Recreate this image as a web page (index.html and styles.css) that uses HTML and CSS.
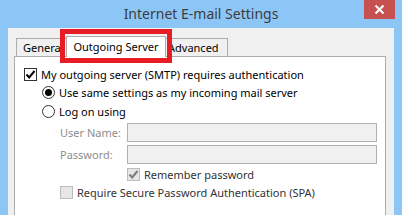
FILE: index.html
```html
<!DOCTYPE html>
<html>
<head>
<meta charset="utf-8">
<link rel="stylesheet" href="styles.css">
</head>
<body>
<div class="window">
  <div class="titlebar">
    <div></div>
    <div class="title">Internet E-mail Settings</div>
    <div class="close"><svg width="11" height="11" viewBox="0 0 11 11"><path d="M1.5 1.5 L9.5 9.5 M9.5 1.5 L1.5 9.5" stroke="#fff" stroke-width="2"/></svg></div>
  </div>
  <div class="client">
    <div class="tabs">
      <div class="tab general">General</div>
      <div class="tab selected">Outgoing Server</div>
      <div class="tab advanced">Advanced</div>
      <div class="highlight"></div>
    </div>
    <div class="panel">
      <div class="row r1">
        <span class="check on"><svg width="11" height="11" viewBox="0 0 11 11"><path d="M1.5 5.5 L4.2 8.5 L9.5 2" fill="none" stroke="#000" stroke-width="2"/></svg></span>
        <span class="txt">My outgoing server (SMTP) requires authentication</span>
      </div>
      <div class="row r2">
        <span class="radio on"><span class="dot"></span></span>
        <span class="txt">Use same settings as my incoming mail server</span>
      </div>
      <div class="row r3">
        <span class="radio"></span>
        <span class="txt">Log on using</span>
      </div>
      <div class="fields">
        <label class="lbl">User Name:</label>
        <div class="input"></div>
        <label class="lbl">Password:</label>
        <div class="input"></div>
      </div>
      <div class="row r6">
        <span class="check dis"><svg width="11" height="11" viewBox="0 0 11 11"><path d="M1.5 5.5 L4.2 8.5 L9.5 2" fill="none" stroke="#7a7a7a" stroke-width="2"/></svg></span>
        <span class="txt">Remember password</span>
      </div>
      <div class="row r7">
        <span class="check dis"></span>
        <span class="txt">Require Secure Password Authentication (SPA)</span>
      </div>
    </div>
  </div>
</div>
</body>
</html>
```
FILE: styles.css
```css
html, body {
  margin: 0;
  padding: 0;
}
body {
  width: 402px;
  height: 215px;
  overflow: hidden;
  background: #8cc6f7;
  font-family: "Noto Sans", "Open Sans", sans-serif;
  font-size: 11px;
}
.window {
  display: flex;
  flex-direction: column;
  height: 215px;
}
.titlebar {
  height: 28px;
  display: grid;
  grid-template-columns: 1fr auto 1fr;
  align-items: start;
}
.title {
  font-size: 14px;
  color: #3c3c3c;
  line-height: 27px;
}
.close {
  justify-self: end;
  margin-right: 7px;
  width: 31px;
  height: 19px;
  background: #c75050;
  display: flex;
  align-items: center;
  justify-content: center;
}
.client {
  flex: 1;
  margin: 0 8px;
  background: #f0f0f0;
  padding: 0 8px 0 6px;
  display: flex;
  flex-direction: column;
}
.tabs {
  position: relative;
  display: flex;
  align-items: flex-end;
  height: 28px;
  padding-left: 2px;
}
.tab {
  height: 17px;
  line-height: 17px;
  border: 1px solid #acacac;
  border-bottom: none;
  background: #f0f0f0;
  color: #000;
  position: relative;
  box-sizing: content-box;
  white-space: nowrap;
  overflow: hidden;
}
.general {
  width: 44px;
  padding-left: 6px;
}
.tab.selected {
  height: 20px;
  line-height: 20px;
  background: #fff;
  margin: 0 -2px -1px;
  width: 98px;
  text-align: center;
  z-index: 1;
}
.advanced {
  width: 59px;
  padding-left: 3px;
}
.highlight {
  position: absolute;
  left: 46px;
  top: 1px;
  width: 102px;
  height: 24px;
  border: 5px solid #e81c24;
  z-index: 2;
}
.panel {
  flex: 1;
  background: #fff;
  border: 1px solid #acacac;
  border-bottom: none;
  padding: 8px 0 0 9px;
  color: #000;
}
.row {
  display: flex;
  align-items: center;
  height: 19px;
}
.r1 { height: 18px; }
.r2, .r3 { padding-left: 18px; }
.r6 { padding-left: 103px; height: 18px; margin-top: 1px; color: #333; }
.r7 { padding-left: 36px; color: #333; }
.txt {
  margin-left: 4px;
  white-space: nowrap;
}
.check, .radio {
  width: 13px;
  height: 13px;
  box-sizing: border-box;
  border: 1px solid #333;
  background: #fff;
  display: flex;
  align-items: center;
  justify-content: center;
  flex: none;
}
.radio {
  border-radius: 50%;
}
.dot {
  width: 7px;
  height: 7px;
  border-radius: 50%;
  background: #000;
}
.check.dis {
  border-color: #bcbcbc;
  background: #e6e6e6;
}
.fields {
  display: grid;
  grid-template-columns: 67px 250px;
  grid-auto-rows: 19px;
  row-gap: 3px;
  margin: 2px 0 0 36px;
  align-items: center;
}
.lbl {
  color: #8d8d8d;
}
.input {
  height: 19px;
  box-sizing: border-box;
  border: 1px solid #adb2b5;
  background: #f0f0f0;
}
```
